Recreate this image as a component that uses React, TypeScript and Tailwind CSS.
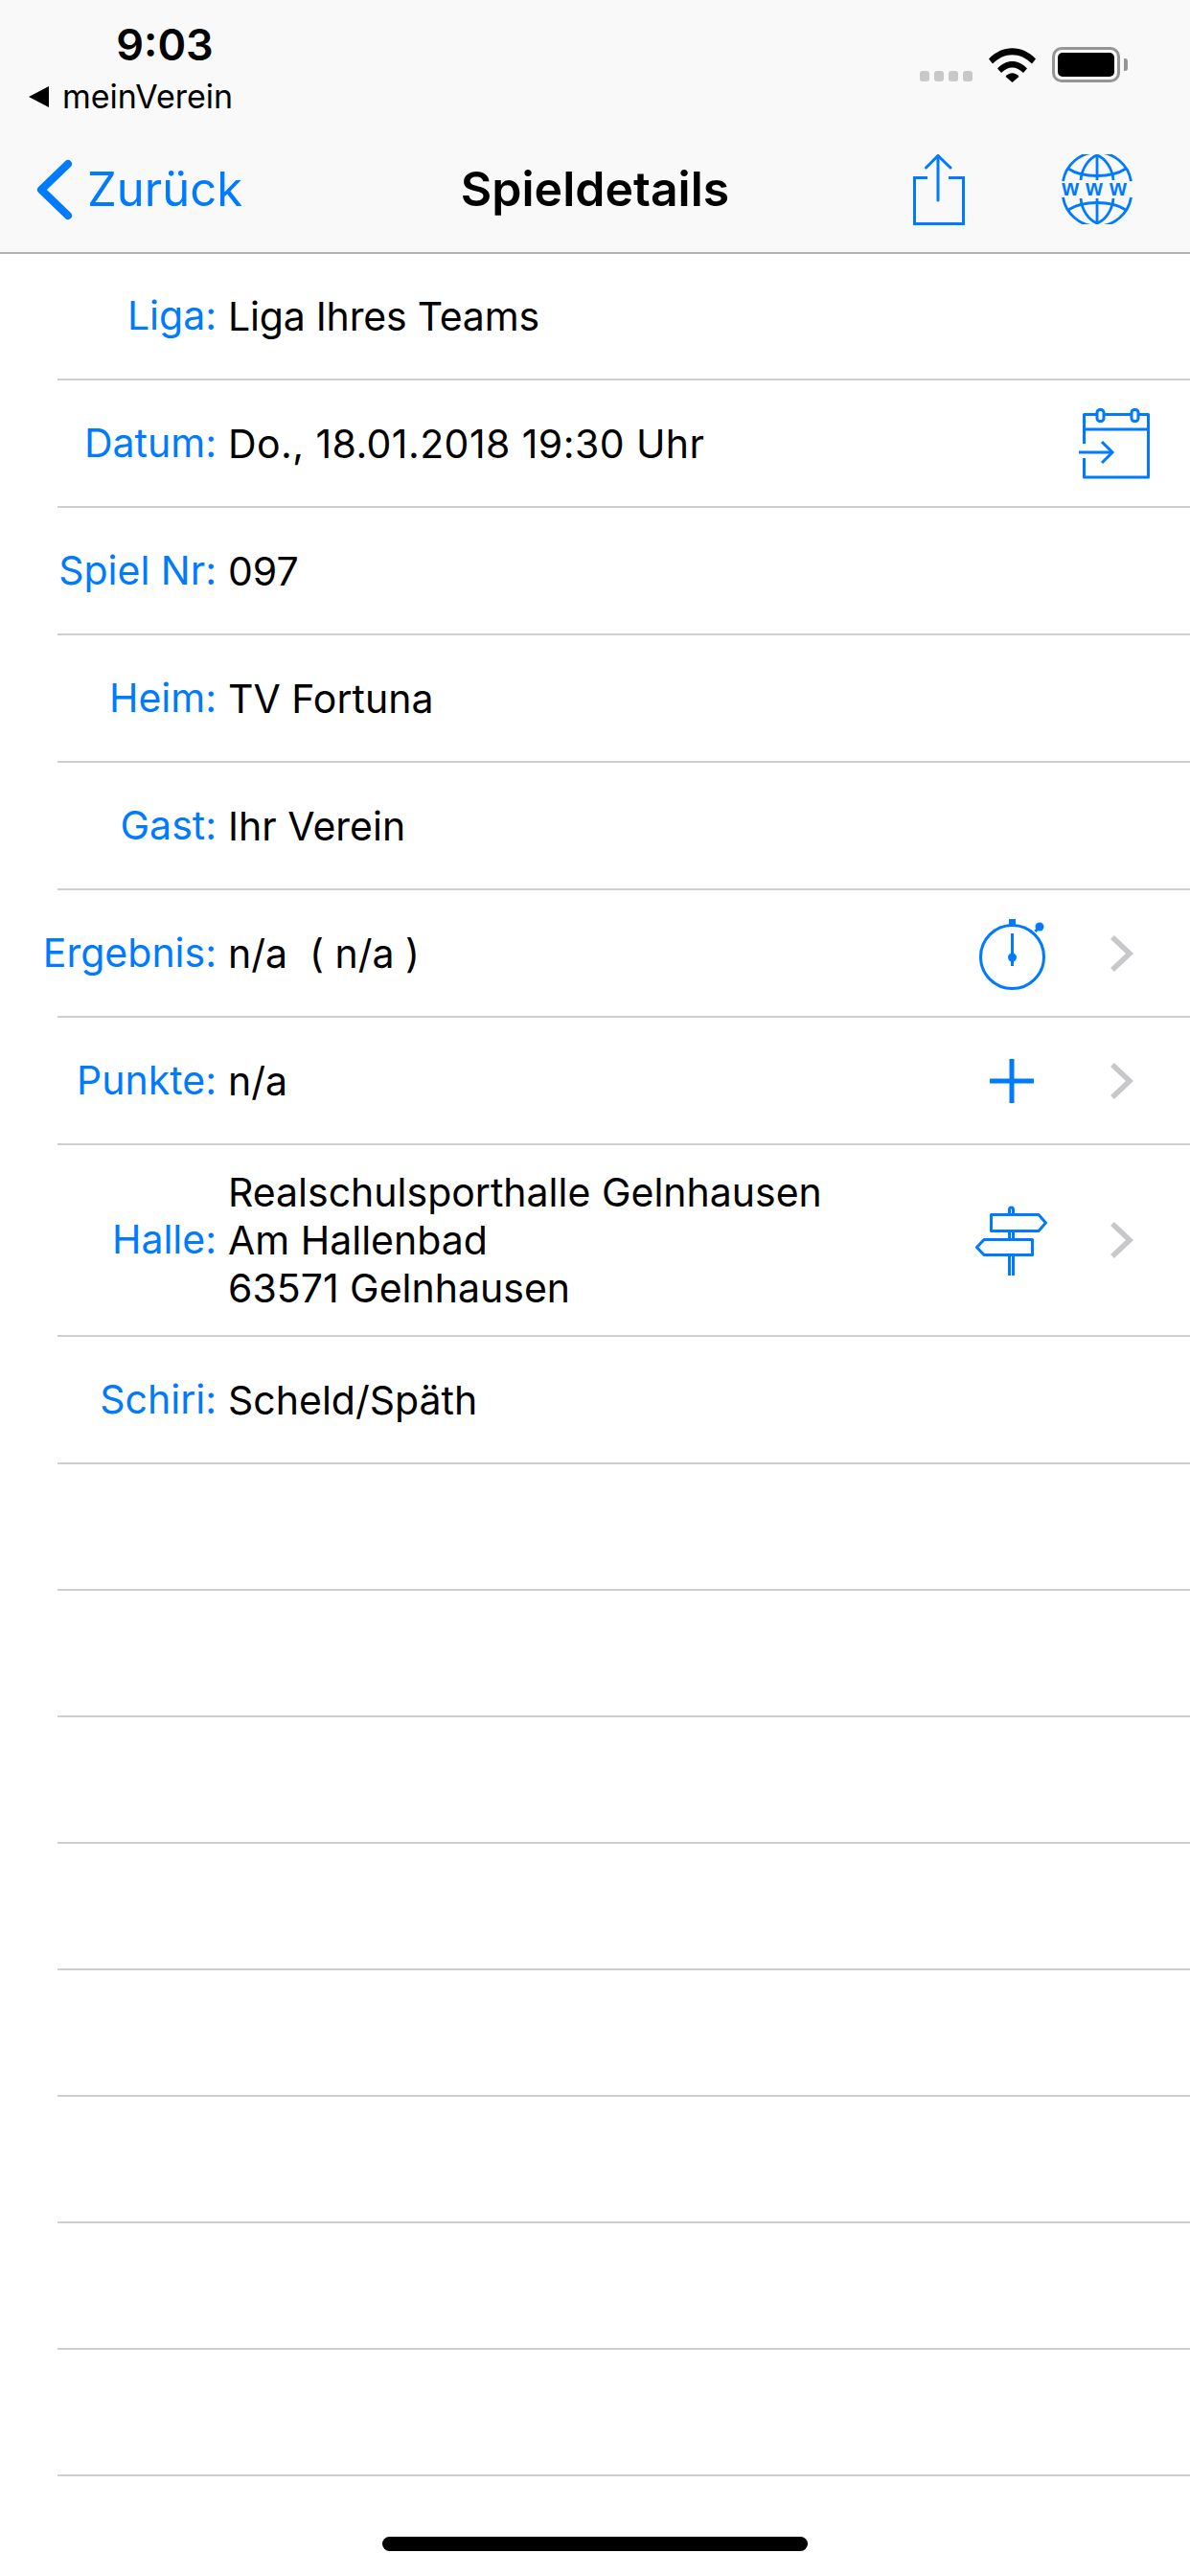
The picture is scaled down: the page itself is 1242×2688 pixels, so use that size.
import React from 'react';

const Blue = '#007aff';

const ShareIcon = () => (
  <svg width="54" height="74" viewBox="0 0 54 74" fill="none" stroke={Blue} strokeWidth="3">
    <path d="M15 24.5H1.5V72.5H52.5V24.5H37" />
    <path d="M26 1.500V48" strokeLinecap="round" />
    <path d="M13.500 14L26 1.500L39 14" strokeLinecap="round" />
  </svg>
);

const GlobeIcon = () => (
  <svg width="74" height="73" viewBox="0 0 74 73" fill="none" stroke={Blue} strokeWidth="2.8">
    <path d="M1.500 28A36 36 0 0 1 72.500 28" />
    <path d="M1.500 45A36 36 0 0 0 72.500 45" />
    <path d="M37 1V27M37 46V72" />
    <path d="M20 27C21 14 29 4 37 1C45 4 53 14 54 27" />
    <path d="M20 46C21 59 29 69 37 72C45 69 53 59 54 46" />
    <path d="M7 15C22 25 52 25 67 15" />
    <path d="M7 58C22 48 52 48 67 58" />
    <text x="37.500" y="43" textAnchor="middle" fill={Blue} stroke="none" fontSize="23" fontWeight="700" fontFamily="Liberation Sans, sans-serif" letterSpacing="7">www</text>
  </svg>
);

const CalendarIcon = () => (
  <svg width="74" height="74" viewBox="0 0 74 74" fill="none" stroke={Blue} strokeWidth="3">
    <path d="M5.500 37V6.500H72.500V72H5.500V52" strokeLinejoin="round" />
    <path d="M5.500 22H72.500" />
    <rect x="19" y="1.500" width="7" height="12" rx="3" fill="#fff" />
    <rect x="55" y="1.500" width="7" height="12" rx="3" fill="#fff" />
    <path d="M0 46H35" />
    <path d="M24 35L35 46L24 57" />
  </svg>
);

const StopwatchIcon = () => (
  <svg width="80" height="76" viewBox="0 0 80 76" fill="none" stroke={Blue}>
    <circle cx="40.500" cy="41.500" r="33" strokeWidth="3" />
    <rect x="37" y="2" width="7" height="7" fill={Blue} stroke="none" />
    <path d="M40.500 17V51" strokeWidth="3" />
    <circle cx="40.500" cy="42" r="4.500" fill={Blue} stroke="none" />
    <path d="M64.500 15L69 10" strokeWidth="3" />
    <circle cx="69" cy="10" r="4.500" fill={Blue} stroke="none" />
  </svg>
);

const PlusIcon = () => (
  <svg width="50" height="50" viewBox="0 0 50 50" fill="none" stroke={Blue} strokeWidth="5">
    <path d="M25 2V48M2 25H48" />
  </svg>
);

const SignpostIcon = () => (
  <svg width="76" height="74" viewBox="0 0 76 74" fill="none" stroke={Blue} strokeWidth="3">
    <path d="M35.500 10V5A2 2 0 0 1 39.500 5V10" />
    <path d="M35.500 27.500V36M39.500 27.500V36" />
    <path d="M35.500 53V74M39.500 53V74" />
    <path d="M16.500 10.500H66L73.500 19L66 27.500H16.500Z" strokeLinejoin="round" />
    <path d="M9 36.500H59.500V52.500H9L1.500 44.500Z" strokeLinejoin="round" />
  </svg>
);

const Chevron = () => (
  <svg width="24" height="38" viewBox="0 0 24 38" fill="none" stroke="#c7c7cc" strokeWidth="5.500">
    <path d="M2 2L20 19L2 36" />
  </svg>
);

const WifiIcon = () => (
  <svg width="49" height="36" viewBox="0 0 49 36" fill="#000">
    <path d="M0 11.500C14-3.500 35-3.500 49 11.500L45 16.500C33 4 16 4 4 16.500Z" />
    <path d="M9 21.500C18 11.500 31 11.500 40 21.500L36 26C29 18.500 20 18.500 13 26Z" />
    <path d="M17.500 30C21.500 25 27.500 25 31.500 30L24.500 36Z" />
  </svg>
);

const rows = [
  { label: 'Liga:', value: ['Liga Ihres Teams'], tracking: 'tracking-[-0.2px]' },
  { label: 'Datum:', value: ['Do., 18.01.2018 19:30 Uhr'], action: 'calendar', tracking: 'tracking-[0.42px]' },
  { label: 'Spiel Nr:', value: ['097'] },
  { label: 'Heim:', value: ['TV Fortuna'] },
  { label: 'Gast:', value: ['Ihr Verein'] },
  { label: 'Ergebnis:', value: ['n/a\u00a0 ( n/a )'], action: 'stopwatch' },
  { label: 'Punkte:', value: ['n/a'], action: 'plus' },
  { label: 'Halle:', value: ['Realschulsporthalle Gelnhausen', 'Am Hallenbad', '63571 Gelnhausen'], action: 'sign' },
  { label: 'Schiri:', value: ['Scheld/Späth'] },
];

const Separator = () => <div className="ml-[60px] h-[2px] bg-[#cfcfd2]" />;

type RowProps = { label: string; value: string[]; action?: string; tracking?: string; first: boolean };

const Row = ({ label, value, action, tracking, first }: RowProps) => (
  <div className={`flex items-center ${value.length > 1 ? 'h-[198px]' : first ? 'h-[130px]' : 'h-[131px]'}`}>
    <div className="w-[226px] text-right text-[#007aff]">{label}</div>
    <div className={`ml-[12px] flex-1 leading-[50px] ${tracking ?? ''}`}>
      {value.map((line) => (
        <div key={line}>{line}</div>
      ))}
    </div>
    {action === 'calendar' && (
      <div className="mr-[42px] flex">
        <CalendarIcon />
      </div>
    )}
    {action && action !== 'calendar' && (
      <div className="mr-[52px] flex items-center">
        <div className="flex w-[80px] justify-center">
          {action === 'stopwatch' && <StopwatchIcon />}
          {action === 'plus' && <PlusIcon />}
          {action === 'sign' && <SignpostIcon />}
        </div>
        <div className="ml-[63px] flex w-[31px]">
          <Chevron />
        </div>
      </div>
    )}
  </div>
);

export default function App() {
  return (
    <div className="relative h-[2688px] w-[1242px] overflow-hidden bg-white font-['Inter',sans-serif] text-[41px] text-black">
      <header className="h-[265px] border-b-2 border-[#b2b2b2] bg-[#f9f9f9]">
        <div className="flex h-[132px] justify-between">
          <div>
            <div className="mt-[22px] w-[344px] text-center text-[45px] leading-[50px] font-semibold">9:03</div>
            <div className="mt-[9px] flex items-center pl-[30px] text-[34px] leading-[40px]">
              <svg width="21" height="22" viewBox="0 0 21 22" fill="#000">
                <path d="M21 0V22L0 11Z" />
              </svg>
              <span className="ml-[14px]">meinVerein</span>
            </div>
          </div>
          <div className="mt-[49px] mr-[65px] flex h-[37px] items-end">
            <div className="mb-px flex gap-[5px]">
              <div className="h-[11px] w-[10px] rounded-[3px] bg-[#c8c8c8]" />
              <div className="h-[11px] w-[10px] rounded-[3px] bg-[#c8c8c8]" />
              <div className="h-[11px] w-[10px] rounded-[3px] bg-[#c8c8c8]" />
              <div className="h-[11px] w-[10px] rounded-[3px] bg-[#c8c8c8]" />
            </div>
            <div className="ml-[17px] flex">
              <WifiIcon />
            </div>
            <div className="ml-[17px] flex h-[37px] items-center">
              <div className="h-[37px] w-[71px] rounded-[10px] border-[3px] border-[#959595] p-[3px]">
                <div className="h-full w-full rounded-[5px] bg-black" />
              </div>
              <div className="ml-[4px] h-[13px] w-[4px] rounded-r-[3px] bg-[#959595]" />
            </div>
          </div>
        </div>
        <nav className="grid h-[131px] grid-cols-[1fr_auto_1fr] items-center">
          <div className="flex items-center pl-[38px] text-[49px] text-[#007aff]">
            <svg width="38" height="64" viewBox="0 0 38 64" fill="none" stroke={Blue} strokeWidth="8" strokeLinecap="round" strokeLinejoin="round">
              <path d="M33 5L5 32L33 59" />
            </svg>
            <span className="ml-[15px]">Zurück</span>
          </div>
          <div className="text-[50px] font-semibold">Spieldetails</div>
          <div className="flex items-center justify-end gap-[101px] pr-[60px]">
            <ShareIcon />
            <GlobeIcon />
          </div>
        </nav>
      </header>

      {rows.map((row, i) => (
        <div key={row.label}>
          <Row label={row.label} value={row.value} action={row.action} tracking={row.tracking} first={i === 0} />
          <Separator />
        </div>
      ))}
      {Array.from({ length: 8 }).map((_, i) => (
        <div key={i}>
          <div className="h-[130px]" />
          <Separator />
        </div>
      ))}

      <div className="absolute bottom-[26px] left-[399px] h-[15px] w-[444px] rounded-full bg-black" />
    </div>
  );
}
